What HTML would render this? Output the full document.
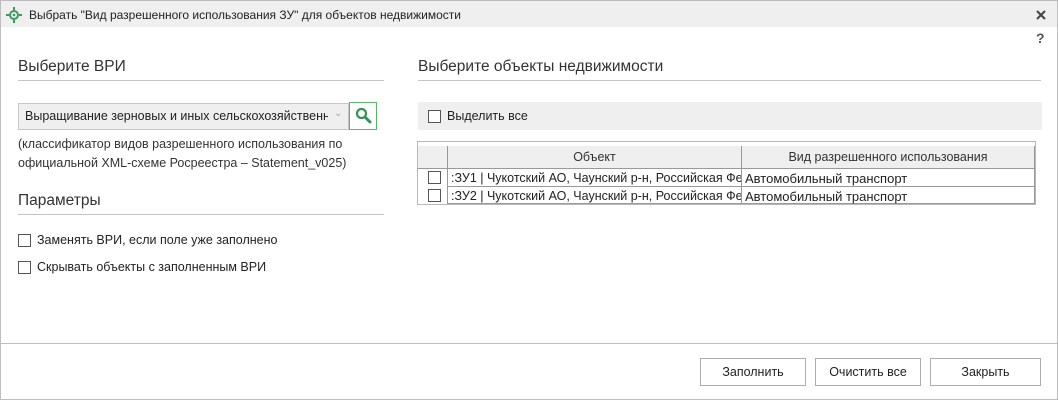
<!DOCTYPE html>
<html><head><meta charset="utf-8"><style>
*{box-sizing:border-box;margin:0;padding:0}
body{width:1058px;height:400px;background:#fff;font-family:"Liberation Sans","DejaVu Sans",sans-serif;font-size:12px;color:#222;position:relative;overflow:hidden}
.a{position:absolute;white-space:nowrap}
.win{left:0;top:0;width:1058px;height:400px;border:1px solid #bdbdbd}
.title{left:1px;top:1px;width:1056px;height:26px;background:#efefef}
.h{font-size:15.5px;color:#333}
.line{height:1px;background:#c4c4c4}
.cb{width:13px;height:13px;border:1px solid #555;background:#fff}
.btn{height:28px;border:1px solid #adadad;background:#fff;text-align:center;line-height:26px;font-size:12.5px}
.tbl{border:1px solid #b8b8b8}
</style></head><body>
<div class="a win"></div>
<div class="a title"></div>
<svg class="a" style="left:6px;top:7px" width="16" height="16" viewBox="0 0 16 16"><circle cx="8" cy="8" r="4" fill="none" stroke="#3c9a5f" stroke-width="2"/><circle cx="8" cy="8" r="1.3" fill="#3c9a5f"/><path d="M0 8h3M13 8h3M8 0v3M8 13v3" stroke="#3c9a5f" stroke-width="2"/></svg>
<div class="a" style="left:29px;top:8px;font-size:12px;color:#222">Выбрать "Вид разрешенного использования ЗУ" для объектов недвижимости</div>
<svg class="a" style="left:1036px;top:10px" width="10" height="10" viewBox="0 0 10 10"><path d="M1 1l8 8M9 1l-8 8" stroke="#444" stroke-width="2"/></svg>
<div class="a" style="left:1036px;top:30px;font-size:14px;font-weight:bold;color:#555">?</div>

<div class="a h" style="left:18px;top:58px">Выберите ВРИ</div>
<div class="a line" style="left:18px;top:80px;width:366px"></div>
<div class="a" style="left:18px;top:103px;width:331px;height:27px;border:1px solid #c8c8c8;background:#efefef"></div>
<div class="a" style="left:25px;top:109px;width:303px;overflow:hidden;font-size:12.5px">Выращивание зерновых и иных сельскохозяйственных культур</div>
<div class="a" style="left:334px;top:108px;color:#aaa;font-size:10px">⌄</div>
<div class="a" style="left:349px;top:102px;width:28px;height:28px;border:1px solid #5fb370;background:#fff"></div>
<svg class="a" style="left:355px;top:107px" width="17" height="17" viewBox="0 0 17 17"><circle cx="6.5" cy="6.5" r="4.5" fill="none" stroke="#3a8f5a" stroke-width="2.2"/><path d="M10 10l5 5" stroke="#3a8f5a" stroke-width="3" stroke-linecap="round"/></svg>
<div class="a" style="left:18px;top:135px;font-size:12.5px;line-height:19px;color:#333">(классификатор видов разрешенного использования по<br>официальной XML-схеме Росреестра – Statement_v025)</div>

<div class="a h" style="left:18px;top:192px">Параметры</div>
<div class="a line" style="left:18px;top:214px;width:366px"></div>
<div class="a cb" style="left:18px;top:234px"></div>
<div class="a" style="left:37px;top:233px;font-size:12.5px">Заменять ВРИ, если поле уже заполнено</div>
<div class="a cb" style="left:18px;top:261px"></div>
<div class="a" style="left:37px;top:260px;font-size:12.5px">Скрывать объекты с заполненным ВРИ</div>

<div class="a h" style="left:418px;top:58px">Выберите объекты недвижимости</div>
<div class="a line" style="left:418px;top:80px;width:623px"></div>
<div class="a" style="left:418px;top:102px;width:624px;height:28px;background:#efefef"></div>
<div class="a cb" style="left:428px;top:110px"></div>
<div class="a" style="left:447px;top:109px;font-size:12.5px">Выделить все</div>

<div class="a tbl" style="left:417px;top:141px;width:619px;height:64px;background:#fff"></div>
<div class="a" style="left:418px;top:146px;width:616px;height:23px;background:#efefef;border-bottom:1px solid #999"></div>
<div class="a" style="left:447px;top:146px;width:1px;height:58px;background:#999"></div>
<div class="a" style="left:741px;top:146px;width:1px;height:58px;background:#999"></div>
<div class="a" style="left:447px;top:186px;width:587px;height:1px;background:#999"></div>
<div class="a" style="left:447px;top:203px;width:587px;height:1px;background:#999"></div>
<div class="a" style="left:1034px;top:146px;width:1px;height:58px;background:#999"></div>
<div class="a" style="left:448px;top:150px;width:293px;text-align:center;font-size:12.5px;color:#333">Объект</div>
<div class="a" style="left:742px;top:150px;width:292px;text-align:center;font-size:12.5px;color:#333">Вид разрешенного использования</div>
<div class="a cb" style="left:428px;top:171px"></div>
<div class="a cb" style="left:428px;top:189px"></div>
<div class="a" style="left:451px;top:171px;width:290px;overflow:hidden;font-size:12.5px">:ЗУ1 | Чукотский АО, Чаунский р-н, Российская Федерация</div>
<div class="a" style="left:451px;top:189px;width:290px;overflow:hidden;font-size:12.5px">:ЗУ2 | Чукотский АО, Чаунский р-н, Российская Федерация</div>
<div class="a" style="left:745px;top:171px;font-size:13px">Автомобильный транспорт</div>
<div class="a" style="left:745px;top:189px;font-size:13px">Автомобильный транспорт</div>

<div class="a line" style="left:1px;top:343px;width:1056px;background:#bdbdbd"></div>
<div class="a btn" style="left:700px;top:358px;width:106px">Заполнить</div>
<div class="a btn" style="left:815px;top:358px;width:106px">Очистить все</div>
<div class="a btn" style="left:930px;top:358px;width:111px">Закрыть</div>
</body></html>
